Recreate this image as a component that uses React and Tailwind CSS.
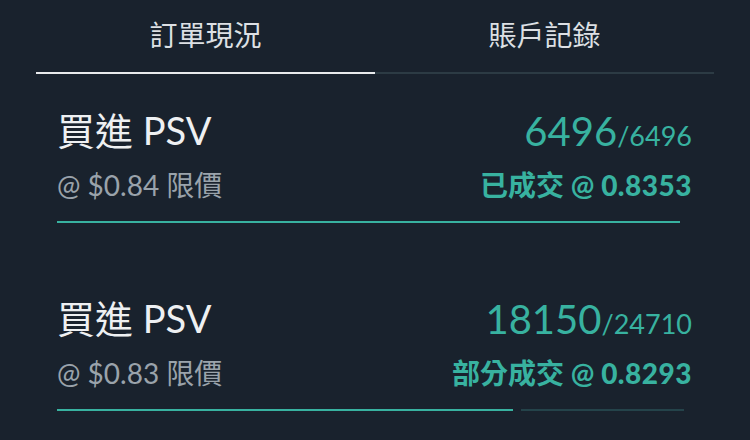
import React from "react";

const orders = [
  {
    side: "買進",
    symbol: "PSV",
    limit: "$0.84",
    filled: "6496",
    total: "6496",
    status: "已成交",
    avg: "0.8353",
    fillW: "w-[623px]",
    restW: null,
  },
  {
    side: "買進",
    symbol: "PSV",
    limit: "$0.83",
    filled: "18150",
    total: "24710",
    status: "部分成交",
    avg: "0.8293",
    fillW: "w-[456px]",
    restW: "w-[163px]",
  },
];

const font = {
  fontFamily: 'Lato, "Noto Sans CJK TC", sans-serif',
};

function OrderRow({ order }) {
  return (
    <div className="pl-[57px] pr-[58px] h-[188px] flex flex-col">
      <div className="flex items-end justify-between pt-[30px]">
        <div className="text-[38px] leading-[48px] text-[#eef0f2]">
          {order.side} {order.symbol}
        </div>
        <div className="flex items-baseline text-[#38b2a0] translate-y-[3px]">
          <span className="text-[40px] leading-[48px]">{order.filled}</span>
          <span className="text-[27px]">/{order.total}</span>
        </div>
      </div>
      <div className="flex items-center justify-between mt-[14px]">
        <div className="text-[28px] leading-[34px] text-[#9aa3ab]">
          @ {order.limit} 限價
        </div>
        <div className="text-[28px] leading-[34px] font-bold text-[#38b2a0]">
          {order.status} @ <span className="font-black tracking-[0.5px]">{order.avg}</span>
        </div>
      </div>
      <div className="flex items-center gap-[8px] mt-[19px]">
        <div className={`${order.fillW} h-[2px] bg-[#38b2a0]`} />
        {order.restW && (
          <div className={`${order.restW} h-[2px] bg-[#24434a]`} />
        )}
      </div>
    </div>
  );
}

export default function App() {
  return (
    <div className="w-[750px] h-[440px] bg-[#19222d] overflow-hidden" style={font}>
      <div className="mx-[36px] flex">
        <div className="w-[339px] h-[74px] flex flex-col">
          <div className="flex-1 flex items-center justify-center pb-[3px] text-[28px] text-[#dde0e4]">
            訂單現況
          </div>
          <div className="h-[2px] bg-[#e8eaec]" />
        </div>
        <div className="w-[339px] h-[74px] flex flex-col">
          <div className="flex-1 flex items-center justify-center pb-[3px] text-[28px] text-[#dde0e4]">
            賬戶記錄
          </div>
          <div className="h-[2px] bg-[#2c3b44]" />
        </div>
      </div>
      {orders.map((o, i) => (
        <OrderRow key={i} order={o} />
      ))}
    </div>
  );
}
